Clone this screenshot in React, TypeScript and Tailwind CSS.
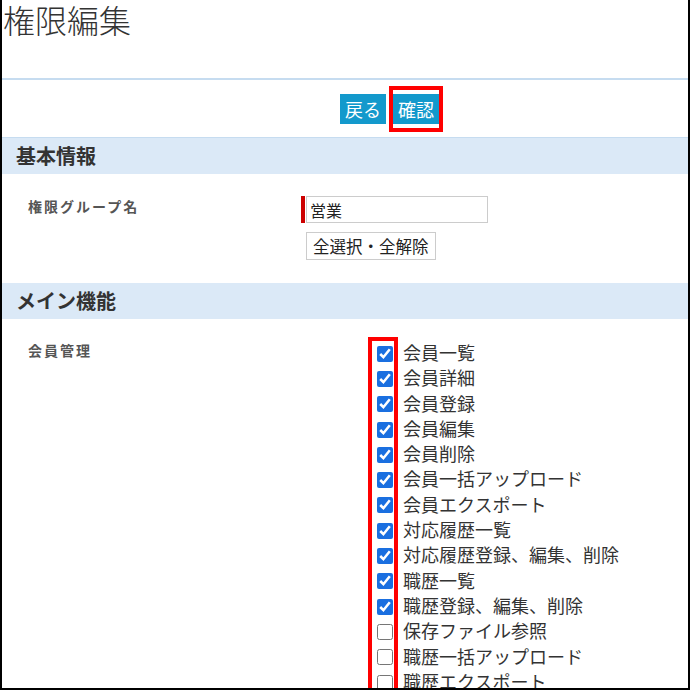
import { useState } from "react"
import clsx from "clsx"

const jp = "font-['Noto_Sans_CJK_JP','Noto_Sans',sans-serif]"

const items = [
  { label: "会員一覧", checked: true },
  { label: "会員詳細", checked: true },
  { label: "会員登録", checked: true },
  { label: "会員編集", checked: true },
  { label: "会員削除", checked: true },
  { label: "会員一括アップロード", checked: true },
  { label: "会員エクスポート", checked: true },
  { label: "対応履歴一覧", checked: true },
  { label: "対応履歴登録、編集、削除", checked: true },
  { label: "職歴一覧", checked: true },
  { label: "職歴登録、編集、削除", checked: true },
  { label: "保存ファイル参照", checked: false },
  { label: "職歴一括アップロード", checked: false },
  { label: "職歴エクスポート", checked: false },
  { label: "職歴詳細", checked: false },
]

const SectionHeader = ({ title }: { title: string }) => (
  <div className="flex h-[36px] items-center bg-[#dbe9f7] pl-[14px]">
    <h2 className="text-[20px] font-bold leading-none text-[#333]">{title}</h2>
  </div>
)

const RowLabel = ({ children }: { children: string }) => (
  <div className="w-[299px] shrink-0 pl-[26px] text-sm font-bold leading-5 tracking-[2px] text-[#555]">
    {children}
  </div>
)

export default function App() {
  const [checks, setChecks] = useState(items.map((i) => i.checked))
  const [name, setName] = useState("営業")

  const toggleAll = () => {
    const all = checks.every(Boolean)
    setChecks(checks.map(() => !all))
  }

  return (
    <div
      className={clsx(
        "h-[690px] w-[690px] overflow-hidden border-x-2 border-b-2 border-black bg-white text-[#333]",
        jp,
      )}
    >
      <h1 className="h-[78px] pl-px text-[32px] font-light leading-[38px] text-[#333]">
        権限編集
      </h1>
      <div className="h-[2px] bg-[#c6dcf0]" />

      <div className="flex h-[57px] items-center pl-[338px]">
        <button className="h-[30px] bg-[#1399cc] px-[5px] text-[18px] leading-none text-white">
          戻る
        </button>
        <div className="ml-[3px] border-4 border-[#ff0000] py-[4px]">
          <button className="block h-[30px] bg-[#1399cc] px-[5px] text-[18px] leading-none text-white">
            確認
          </button>
        </div>
      </div>
      <div className="h-[1px] bg-[#c6dcf0]" />

      <SectionHeader title="基本情報" />
      <div className="flex pb-[23px] pt-[22px]">
        <RowLabel>権限グループ名</RowLabel>
        <div className="flex flex-col gap-[9px]">
          <div className="flex items-stretch gap-[1px]">
            <div className="w-[4px] bg-[#cc0000]" />
            <input
              value={name}
              onChange={(e) => setName(e.target.value)}
              className="h-[27px] w-[182px] border border-[#cccccc] px-[3px] text-[16px] text-[#222] outline-none"
            />
          </div>
          <div className="pl-[5px]">
            <button
              onClick={toggleAll}
              className="h-[28px] border border-[#cccccc] bg-white px-[6px] text-[16.5px] leading-none text-[#222]"
            >
              全選択・全解除
            </button>
          </div>
        </div>
      </div>

      <SectionHeader title="メイン機能" />
      <div className="flex pt-[18px]">
        <div className="w-[366px] shrink-0 pl-[26px] pt-[3px] text-sm font-bold leading-5 tracking-[2px] text-[#555]">
          会員管理
        </div>
        <div className="flex flex-col border-4 border-[#ff0000] pl-[5px] pr-[1px]">
          {items.map((item, i) => (
            <div key={item.label} className="flex h-[25.3px] items-center">
              <input
                type="checkbox"
                id={`perm-${i}`}
                checked={checks[i]}
                onChange={() =>
                  setChecks(checks.map((c, j) => (j === i ? !c : c)))
                }
                className="m-0 h-4 w-4 accent-[#1a6fe0]"
              />
            </div>
          ))}
        </div>
        <div className="flex flex-col pl-[5px] pt-[3px]">
          {items.map((item, i) => (
            <label
              key={item.label}
              htmlFor={`perm-${i}`}
              className="h-[25.3px] whitespace-nowrap text-[18px] leading-[25.3px] text-[#333]"
            >
              {item.label}
            </label>
          ))}
        </div>
      </div>
    </div>
  )
}
